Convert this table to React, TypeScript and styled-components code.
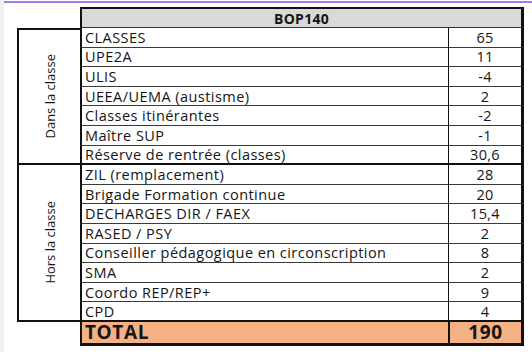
import React from "react";
import styled, { createGlobalStyle } from "styled-components";

const GlobalStyle = createGlobalStyle`
  html, body {
    margin: 0;
    padding: 0;
    background: #ffffff;
  }
  body {
    font-family: "Open Sans", "Liberation Sans", sans-serif;
    color: #151515;
  }
`;

type Row = { label: string; value: string };

const dansLaClasse: Row[] = [
  { label: "CLASSES", value: "65" },
  { label: "UPE2A", value: "11" },
  { label: "ULIS", value: "-4" },
  { label: "UEEA/UEMA (austisme)", value: "2" },
  { label: "Classes itinérantes", value: "-2" },
  { label: "Maître SUP", value: "-1" },
  { label: "Réserve de rentrée (classes)", value: "30,6" },
];

const horsLaClasse: Row[] = [
  { label: "ZIL (remplacement)", value: "28" },
  { label: "Brigade Formation continue", value: "20" },
  { label: "DECHARGES DIR / FAEX", value: "15,4" },
  { label: "RASED / PSY", value: "2" },
  { label: "Conseiller pédagogique en circonscription", value: "8" },
  { label: "SMA", value: "2" },
  { label: "Coordo REP/REP+", value: "9" },
  { label: "CPD", value: "4" },
];

const Page = styled.div`
  width: 532px;
  height: 352px;
  box-sizing: border-box;
  border-left: 4px solid #f1f1f1;
  overflow: hidden;
`;

const TopRule = styled.div`
  height: 2px;
  margin-top: 1px;
  background: #a47ce6;
`;

const Sheet = styled.div`
  margin: 4px 0 0 13px;
  display: grid;
  grid-template-columns: 63px 368px 76px;
  grid-template-rows: 21px repeat(15, 19.6px) 24px;
`;

const Header = styled.div`
  grid-column: 2 / 4;
  box-sizing: border-box;
  background: #d9d9d9;
  border-top: 2px solid #111;
  border-left: 2px solid #111;
  border-right: 3px solid #111;
  border-bottom: 1px solid #333;
  display: flex;
  align-items: center;
  justify-content: center;
  font-weight: 700;
  font-size: 14px;
  letter-spacing: 0.3px;
`;

const Group = styled.div<{ $first?: boolean }>`
  grid-column: 1;
  box-sizing: border-box;
  border-left: 2px solid #111;
  border-top: ${({ $first }) => ($first ? "2px solid #111" : "none")};
  border-bottom: 2px solid #111;
  display: flex;
  align-items: center;
  justify-content: center;
`;

const GroupTitle = styled.span`
  writing-mode: vertical-rl;
  transform: rotate(180deg);
  font-size: 13px;
  white-space: nowrap;
`;

const Label = styled.div<{ $last?: boolean }>`
  grid-column: 2;
  box-sizing: border-box;
  border-left: 2px solid #111;
  border-bottom: ${({ $last }) => ($last ? "2px solid #111" : "1px solid #3a3a3a")};
  display: flex;
  align-items: center;
  padding-left: 3px;
  font-size: 14.5px;
  letter-spacing: 0.45px;
  white-space: nowrap;
`;

const Value = styled.div<{ $last?: boolean }>`
  grid-column: 3;
  box-sizing: border-box;
  border-left: 1px solid #111;
  border-right: 3px solid #111;
  border-bottom: ${({ $last }) => ($last ? "2px solid #111" : "1px solid #3a3a3a")};
  display: flex;
  align-items: center;
  justify-content: center;
  font-size: 14.5px;
  letter-spacing: 0.3px;
`;

const Blank = styled.div`
  grid-column: 1;
`;

const TotalLabel = styled(Label)`
  background: #f4b183;
  border-bottom: 3px solid #111;
  font-weight: 700;
  font-size: 19px;
  letter-spacing: 0.6px;
`;

const TotalValue = styled(Value)`
  background: #f4b183;
  border-left: 2px solid #111;
  border-bottom: 3px solid #111;
  font-weight: 700;
  font-size: 19px;
  letter-spacing: 0.6px;
`;

function Rows({ rows }: { rows: Row[] }) {
  return (
    <>
      {rows.map((r, i) => (
        <React.Fragment key={r.label}>
          <Label $last={i === rows.length - 1}>{r.label}</Label>
          <Value $last={i === rows.length - 1}>{r.value}</Value>
        </React.Fragment>
      ))}
    </>
  );
}

export default function App() {
  return (
    <Page>
      <GlobalStyle />
      <TopRule />
      <Sheet>
        <Blank />
        <Header>BOP140</Header>

        <Group $first style={{ gridRow: "2 / 9" }}>
          <GroupTitle>Dans la classe</GroupTitle>
        </Group>
        <Rows rows={dansLaClasse} />

        <Group style={{ gridRow: "9 / 17" }}>
          <GroupTitle>Hors la classe</GroupTitle>
        </Group>
        <Rows rows={horsLaClasse} />

        <Blank />
        <TotalLabel>TOTAL</TotalLabel>
        <TotalValue>190</TotalValue>
      </Sheet>
    </Page>
  );
}
